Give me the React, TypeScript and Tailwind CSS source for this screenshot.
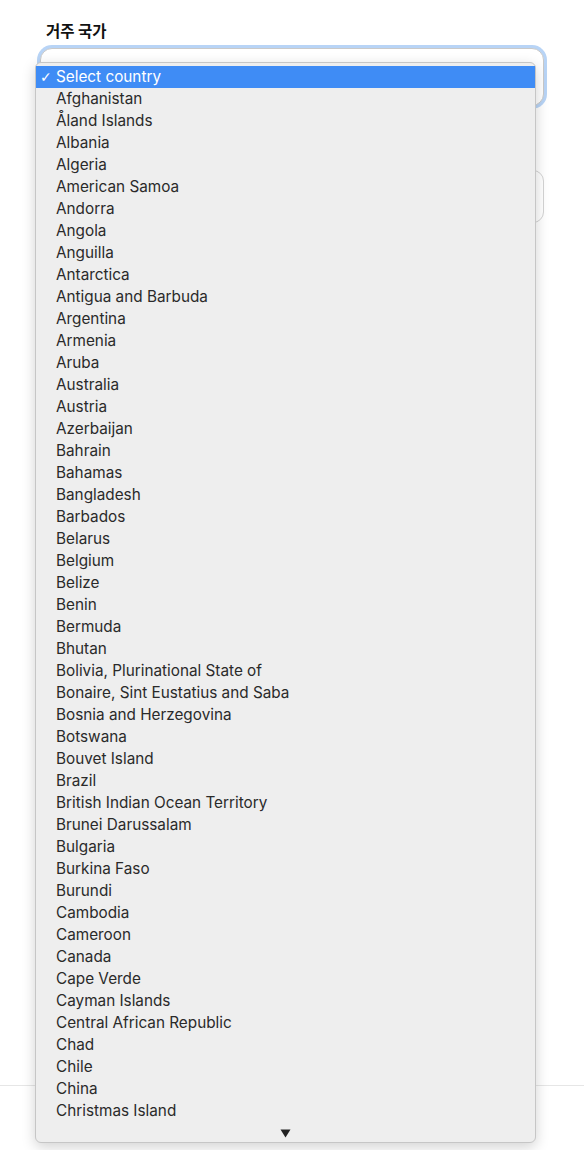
import React from "react";

const countries = [
  "Afghanistan",
  "Åland Islands",
  "Albania",
  "Algeria",
  "American Samoa",
  "Andorra",
  "Angola",
  "Anguilla",
  "Antarctica",
  "Antigua and Barbuda",
  "Argentina",
  "Armenia",
  "Aruba",
  "Australia",
  "Austria",
  "Azerbaijan",
  "Bahrain",
  "Bahamas",
  "Bangladesh",
  "Barbados",
  "Belarus",
  "Belgium",
  "Belize",
  "Benin",
  "Bermuda",
  "Bhutan",
  "Bolivia, Plurinational State of",
  "Bonaire, Sint Eustatius and Saba",
  "Bosnia and Herzegovina",
  "Botswana",
  "Bouvet Island",
  "Brazil",
  "British Indian Ocean Territory",
  "Brunei Darussalam",
  "Bulgaria",
  "Burkina Faso",
  "Burundi",
  "Cambodia",
  "Cameroon",
  "Canada",
  "Cape Verde",
  "Cayman Islands",
  "Central African Republic",
  "Chad",
  "Chile",
  "China",
  "Christmas Island",
];

export default function App() {
  return (
    <div
      className="relative w-[584px] h-[1150px] bg-white overflow-hidden"
      style={{ fontFamily: 'Inter, "Liberation Sans", Arial, "Noto Sans CJK KR", sans-serif' }}
    >
      {/* underlying page */}
      <div className="flex flex-col pt-[20px]">
        <div className="flex flex-col px-[40px]">
          <div
            className="pl-[6px] text-[15.5px] font-bold text-[#111] leading-[20px]"
            style={{ fontFamily: '"Noto Sans CJK KR", sans-serif' }}
          >
            거주 국가
          </div>
          <div className="mt-[8px] h-[58px] rounded-[12px] border border-[#c9c9c9] ring-[3px] ring-[#b8d4f6] bg-white" />
          <div className="mt-[64px] h-[53px] rounded-[11px] border border-[#d4d4d4] bg-white" />
        </div>
        <div className="mt-[862px] h-px bg-[#e6e6e6]" />
      </div>

      {/* native dropdown overlay */}
      <div className="absolute left-[35px] top-[62px] w-[501px] h-[1081px] rounded-[6px] bg-[#eeeeee] border border-[#c6c6c6] shadow-[0_4px_14px_rgba(0,0,0,0.18)] pt-[3px] flex flex-col">
        <div className="flex items-center h-[22px] bg-[#3f8cf5] text-white text-[15.3px] leading-[22px]">
          <span
            className="w-[20px] pl-[4px] text-[14px]"
            style={{ fontFamily: '"DejaVu Sans", sans-serif' }}
          >
            ✓
          </span>
          <span>Select country</span>
        </div>
        {countries.map((c) => (
          <div key={c} className="h-[22px] pl-[20px] text-[15.3px] leading-[22px] text-[#2a2a2a]">
            {c}
          </div>
        ))}
        <div className="mt-auto mb-[4px] flex justify-center">
          <svg width="11" height="9" viewBox="0 0 11 9">
            <path d="M0.5 0.5 L10.5 0.5 L5.5 8.5 Z" fill="#222" />
          </svg>
        </div>
      </div>
    </div>
  );
}
